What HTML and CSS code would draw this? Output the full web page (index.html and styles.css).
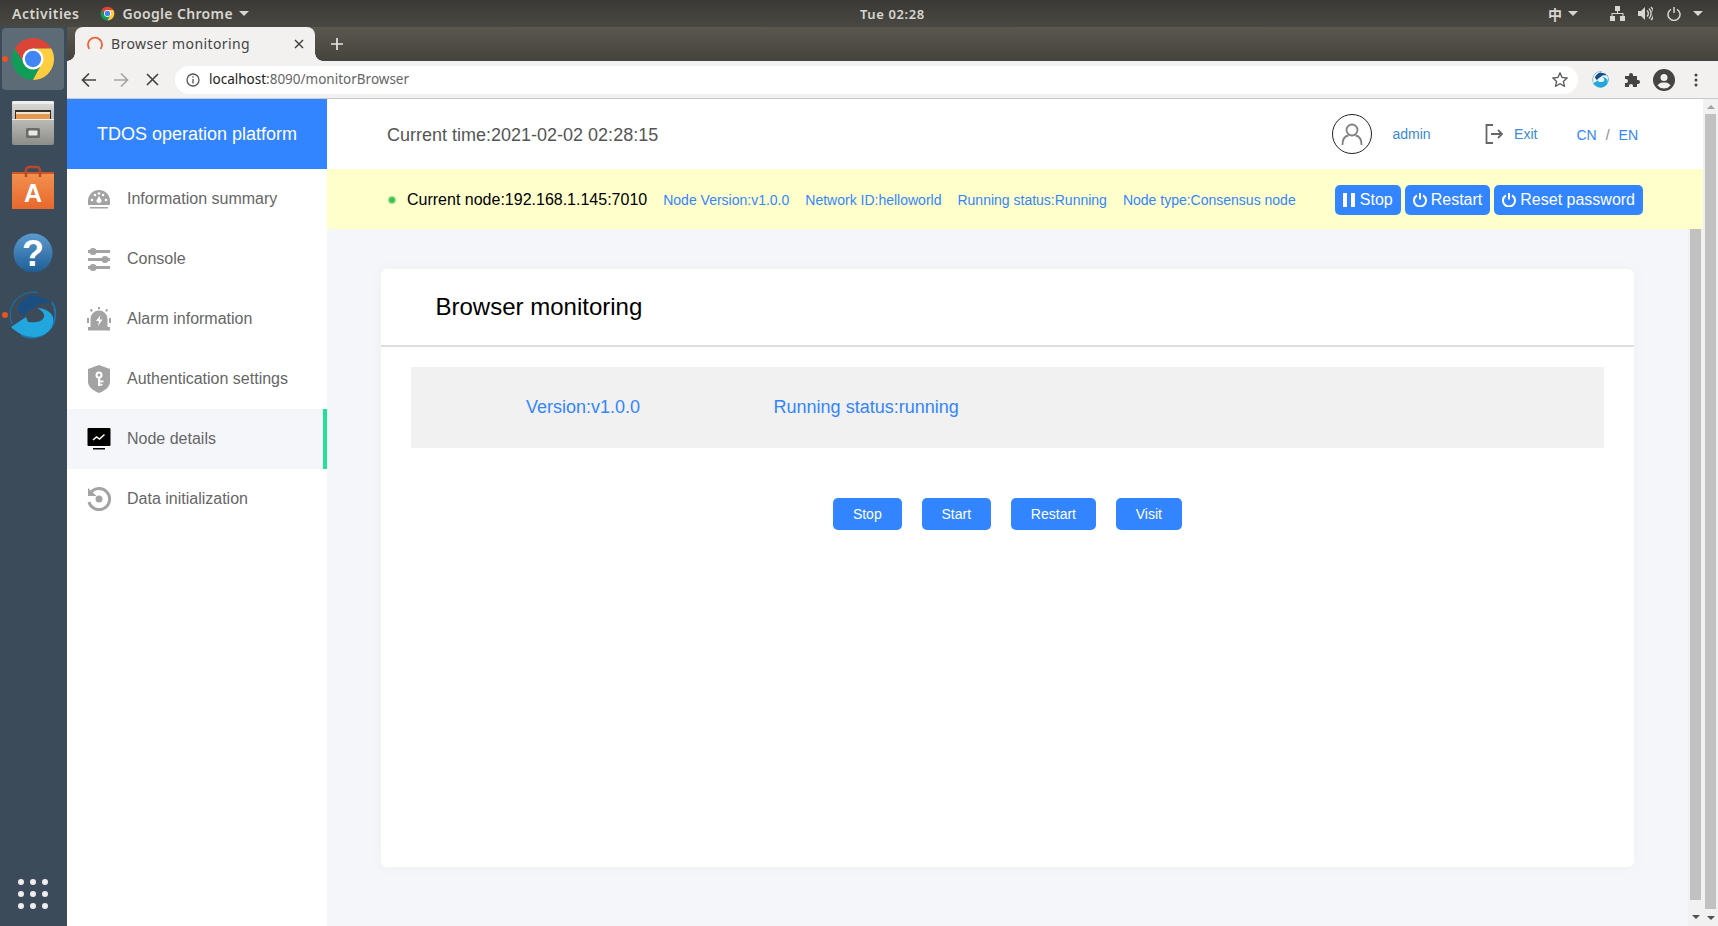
FILE: index.html
```html
<!DOCTYPE html>
<html lang="en">
<head>
    <meta charset="UTF-8">
    <meta name="viewport" content="width=device-width, initial-scale=1.0">
    <title>Browser monitoring</title>
    <link rel="stylesheet" href="styles.css">
</head>
<body>
    <svg class="defs" width="0" height="0">
        <symbol id="chrome" viewBox="0 0 48 48">
            <path fill="#db4437" d="M5 13A22 22 0 0 1 43 13L24 13 15 29Z"/>
            <path fill="#0f9d58" d="M5 13A22 22 0 0 0 24 46L33 29 15 29Z"/>
            <path fill="#ffcd40" d="M43 13A22 22 0 0 1 24 46L33 29 24 13Z"/>
            <circle cx="24" cy="24" r="11" fill="#fff"/>
            <circle cx="24" cy="24" r="8.5" fill="#4285f4"/>
        </symbol>
        <symbol id="swirl" viewBox="0 0 48 48">
            <path fill="none" stroke="#1a6ea8" stroke-width="1.3" d="M28 1.5A23 23 0 0 0 3 33"/>
            <path fill="none" stroke="#1c78b4" stroke-width="1.600" d="M43 11A23.500 23.500 0 0 1 12 44"/>
            <path fill="#1b4f82" d="M8 18C12 9 18 5 24 4L38 8 42 13C36 11 30 12 27 15L17 22 14 26Z"/>
            <path fill="#22a6de" d="M2 36L17 26 19 31C26 32 33 31 35 26 36 22 32 19 28 17 36 17 42 21 44 26 46 36 38 46 24 46 16 46 8 42 2 36Z"/>
        </symbol>
    </svg>

    <div class="topbar">
        <span class="activities">Activities</span>
        <svg class="app-icon" width="15" height="15"><use href="#chrome"/></svg>
        <span class="app-name">Google Chrome</span>
        <span class="caret"></span>
        <span class="clock">Tue 02:28</span>
        <div class="tray">
            <span class="ime">中</span>
            <span class="caret"></span>
            <svg class="tray-net" width="15" height="15" viewBox="0 0 15 15" fill="#d8d6d0">
                <rect x="5" y="0" width="5" height="5"/><rect x="0" y="10" width="5" height="5"/><rect x="10" y="10" width="5" height="5"/>
                <path d="M7 5h1v2h5.500v3h-1V8H2.500v2h-1V7H7z"/>
            </svg>
            <svg class="tray-sound" width="15" height="15" viewBox="0 0 15 15" fill="none" stroke="#d8d6d0" stroke-width="1.400">
                <path fill="#d8d6d0" stroke="none" d="M0 5h3l4-4v13l-4-4H0z"/>
                <path d="M9 4.500a4 4 0 0 1 0 6M11 2.500a7 7 0 0 1 0 10M13 1a9 9 0 0 1 0 13"/>
            </svg>
            <svg class="tray-power" width="14" height="14" viewBox="0 0 14 14" fill="none" stroke="#d8d6d0" stroke-width="1.500">
                <path d="M4 2.300a6 6 0 1 0 6 0M7 0v6"/>
            </svg>
            <span class="caret"></span>
        </div>
    </div>

    <div class="desktop">
        <nav class="dock">
            <div class="dock-tile">
                <svg width="46" height="46"><use href="#chrome"/></svg>
                <span class="dock-dot"></span>
            </div>
            <div class="dock-item">
                <svg width="44" height="46" viewBox="0 0 44 46">
                    <defs>
                        <linearGradient id="cab" x1="0" y1="0" x2="0" y2="1"><stop offset="0" stop-color="#dcdcda"/><stop offset="1" stop-color="#8c8c89"/></linearGradient>
                    </defs>
                    <rect x="1" y="0" width="42" height="44" rx="2" fill="url(#cab)"/>
                    <rect x="1" y="0" width="42" height="3" rx="1.500" fill="#efefed"/>
                    <rect x="4" y="9" width="36" height="9" fill="#332e29"/>
                    <rect x="5" y="11" width="34" height="2" fill="#f4e4cf"/>
                    <rect x="5" y="13" width="34" height="5" fill="#e39a50"/>
                    <rect x="1" y="18" width="42" height="1" fill="#efefed"/>
                    <rect x="15" y="27" width="14" height="10" rx="1.500" fill="#6a6a68"/>
                    <rect x="17.500" y="29.500" width="9" height="5" rx="1" fill="#e8e8e6"/>
                </svg>
            </div>
            <div class="dock-item">
                <svg width="44" height="46" viewBox="0 0 44 46">
                    <defs>
                        <linearGradient id="bag" x1="0" y1="0" x2="0" y2="1"><stop offset="0" stop-color="#f29350"/><stop offset="1" stop-color="#e8672c"/></linearGradient>
                    </defs>
                    <rect x="1" y="7" width="42" height="37" fill="url(#bag)"/>
                    <rect x="1" y="7" width="42" height="2" fill="#c9572b"/>
                    <path fill="none" stroke="#b9472a" stroke-width="2.500" d="M15 12V5a3 3 0 0 1 3-3h8a3 3 0 0 1 3 3v7"/>
                    <text class="bag-a" x="22" y="37" text-anchor="middle">A</text>
                </svg>
            </div>
            <div class="dock-item">
                <svg width="40" height="40" viewBox="0 0 40 40">
                    <defs>
                        <linearGradient id="hlp" x1="0" y1="0" x2="0" y2="1"><stop offset="0" stop-color="#5a9bce"/><stop offset="1" stop-color="#1f5d96"/></linearGradient>
                    </defs>
                    <circle cx="20" cy="20" r="19.500" fill="url(#hlp)"/>
                    <text class="help-q" x="20" y="33" text-anchor="middle">?</text>
                </svg>
            </div>
            <div class="dock-item dock-item-last">
                <svg width="48" height="48"><use href="#swirl"/></svg>
                <span class="dock-dot"></span>
            </div>
            <div class="app-grid">
                <i></i><i></i><i></i><i></i><i></i><i></i><i></i><i></i><i></i>
            </div>
        </nav>

        <div class="browser">
            <div class="tabstrip">
                <div class="tab">
                    <svg width="16" height="16" viewBox="0 0 16 16" fill="none" stroke="#e8663c" stroke-width="1.800">
                        <path d="M2.500 13A7 7 0 1 1 13.500 13"/>
                    </svg>
                    <span class="tab-title">Browser monitoring</span>
                    <svg class="tab-close" width="10" height="10" viewBox="0 0 10 10" stroke="#444" stroke-width="1.500"><path d="M1 1l8 8M9 1l-8 8"/></svg>
                </div>
                <svg class="tab-new" width="14" height="14" viewBox="0 0 14 14" stroke="#e8e6e2" stroke-width="1.700"><path d="M7 1v12M1 7h12"/></svg>
            </div>

            <div class="toolbar">
                <svg class="nav-back" width="16" height="16" viewBox="0 0 16 16" fill="none" stroke="#444" stroke-width="1.700"><path d="M15 8H2M8 1.500L1.500 8 8 14.500"/></svg>
                <svg class="nav-forward" width="16" height="16" viewBox="0 0 16 16" fill="none" stroke="#a5a5a5" stroke-width="1.700"><path d="M1 8h13M8 1.500L14.500 8 8 14.500"/></svg>
                <svg class="nav-stop" width="13" height="13" viewBox="0 0 13 13" stroke="#444" stroke-width="1.700"><path d="M1 1l11 11M12 1L1 12"/></svg>
                <div class="omnibox">
                    <svg width="14" height="14" viewBox="0 0 14 14" fill="none" stroke="#555" stroke-width="1.300">
                        <circle cx="7" cy="7" r="6"/><path d="M7 6v4.500M7 3.300v1.500"/>
                    </svg>
                    <span class="url"><b>localhost</b>:8090/monitorBrowser</span>
                    <svg class="star" width="16" height="15" viewBox="0 0 16 15" fill="none" stroke="#555" stroke-width="1.300">
                        <path d="M8 1l2.100 4.500 4.900.6-3.600 3.300 1 4.800L8 11.800 3.600 14.200l1-4.800L1 6.100l4.900-.6z"/>
                    </svg>
                </div>
                <svg class="ext-logo" width="17" height="17"><use href="#swirl"/></svg>
                <svg class="ext-puzzle" width="16" height="16" viewBox="0 0 16 16" fill="#444">
                    <path d="M1 4h4V3a2 2 0 0 1 4 0v1h4v4h1a2 2 0 0 1 0 4h-1v3H9v-1a2 2 0 0 0-4 0v1H1v-4h1a2 2 0 0 0 0-4H1z"/>
                </svg>
                <svg class="profile" width="22" height="22" viewBox="0 0 22 22">
                    <circle cx="11" cy="11" r="11" fill="#444"/>
                    <circle cx="11" cy="8.500" r="3.500" fill="#f2f1f0"/>
                    <path fill="#f2f1f0" d="M4.500 16.500C6 13.800 8.500 13.500 11 13.500s5 .3 6.500 3A8.500 8.500 0 0 1 11 19.500a8.500 8.500 0 0 1-6.500-3z"/>
                </svg>
                <svg class="menu-dots" width="4" height="14" viewBox="0 0 4 14" fill="#444"><circle cx="2" cy="2" r="1.500"/><circle cx="2" cy="7" r="1.500"/><circle cx="2" cy="12" r="1.500"/></svg>
            </div>

            <div class="page">
                <aside class="sidebar">
                    <div class="brand">TDOS operation platform</div>
                    <a class="menu-item">
                        <svg width="24" height="24" viewBox="0 0 24 24" fill="#a3a3a3">
                            <path d="M1 18V14A11 11 0 0 1 23 14V18Z"/>
                            <rect x="3" y="20" width="18" height="1.500"/>
                            <g fill="#fff"><circle cx="5" cy="13" r="1.300"/><circle cx="8" cy="8" r="1.300"/><circle cx="16" cy="8" r="1.300"/><circle cx="19" cy="13" r="1.300"/><circle cx="12" cy="6.500" r="1.300"/><path d="M12 9l2.500 4.500a2.500 2.500 0 1 1-5 0z"/></g>
                        </svg>
                        Information summary
                    </a>
                    <a class="menu-item">
                        <svg width="24" height="24" viewBox="0 0 24 24" fill="#a3a3a3">
                            <rect x="1" y="3" width="22" height="3"/><rect x="1" y="11" width="22" height="3"/><rect x="1" y="19" width="22" height="3"/>
                            <circle cx="6" cy="4.500" r="3.500"/><circle cx="18" cy="12.500" r="3.500"/><circle cx="6" cy="20.500" r="3.500"/>
                        </svg>
                        Console
                    </a>
                    <a class="menu-item">
                        <svg width="24" height="24" viewBox="0 0 24 24" fill="#a3a3a3">
                            <path d="M3.500 20v-8a8.500 8.500 0 0 1 17 0v8z"/>
                            <rect x="1" y="20" width="22" height="3.500"/>
                            <path fill="#fff" d="M13.500 8l-4.500 6h3l-1 5 4.500-6.500h-3z"/>
                            <path d="M11 0h2v2.200h-2zM2.800 3l1.500-1.300 1.600 1.900-1.500 1.300zM21.200 3l-1.500-1.300-1.600 1.900 1.500 1.300zM0 11h2v5H0zM22 11h2v5h-2z"/>
                        </svg>
                        Alarm information
                    </a>
                    <a class="menu-item">
                        <svg width="24" height="28" viewBox="0 0 24 28" fill="#a3a3a3">
                            <path d="M12 0L23 4V17C23 22 17 26 12 28 7 26 1 22 1 17V4Z"/>
                            <circle cx="12" cy="10" r="2.500" fill="none" stroke="#fff" stroke-width="2"/>
                            <path fill="#fff" d="M11 12h2.200v9H11zM13 15.500h3.500v1.800H13zM13 18.800h2.500v1.800H13z"/>
                        </svg>
                        Authentication settings
                    </a>
                    <a class="menu-item menu-item-active">
                        <svg width="24" height="22" viewBox="0 0 24 22">
                            <rect x="0.500" y="0" width="23" height="18" rx="1" fill="#000"/>
                            <rect x="6" y="20" width="12" height="1.500" fill="#000"/>
                            <path fill="none" stroke="#fff" stroke-width="1.500" d="M6 12l3.500-3 3 2 5-4.500"/>
                        </svg>
                        Node details
                    </a>
                    <a class="menu-item">
                        <svg width="24" height="24" viewBox="0 0 24 24" fill="none" stroke="#a3a3a3" stroke-width="3">
                            <path d="M3.500 6A10.500 10.500 0 1 1 2 15"/>
                            <path fill="#a3a3a3" stroke="none" d="M1 1l8.500 8H1z"/>
                            <circle cx="12" cy="12" r="3.500" fill="#a3a3a3" stroke="none"/>
                        </svg>
                        Data initialization
                    </a>
                </aside>

                <main class="main">
                    <header class="top-header">
                        <span class="current-time">Current time:2021-02-02 02:28:15</span>
                        <div class="avatar">
                            <svg width="24" height="24" viewBox="0 0 24 24" fill="none" stroke="#808080" stroke-width="1.800">
                                <circle cx="12" cy="8" r="5.500"/><path d="M2.500 23c0-6 3-9 6-9.500M21.500 23c0-6-3-9-6-9.500"/>
                            </svg>
                        </div>
                        <span class="username">admin</span>
                        <svg class="exit-icon" width="18" height="20" viewBox="0 0 18 20" fill="none" stroke="#666" stroke-width="1.800">
                            <path d="M8 1H1.500v18H8M6 10h11M13 6l4 4-4 4"/>
                        </svg>
                        <span class="exit-link">Exit</span>
                        <span class="lang"><a>CN</a><em>/</em><a>EN</a></span>
                    </header>

                    <div class="node-bar">
                        <span class="node-dot"></span>
                        <span class="node-current">Current node:192.168.1.145:7010</span>
                        <span class="node-info">Node Version:v1.0.0</span>
                        <span class="node-info">Network ID:helloworld</span>
                        <span class="node-info">Running status:Running</span>
                        <span class="node-info">Node type:Consensus node</span>
                        <div class="node-actions">
                            <button class="bar-btn bar-btn-stop">
                                <svg width="12" height="14" viewBox="0 0 12 14" fill="#fff"><rect width="4" height="14"/><rect x="8" width="4" height="14"/></svg>
                                Stop
                            </button>
                            <button class="bar-btn">
                                <svg width="14" height="14" viewBox="0 0 14 14" fill="none" stroke="#fff" stroke-width="2"><path d="M4 2.300a6 6 0 1 0 6 0M7 0v6.500"/></svg>
                                Restart
                            </button>
                            <button class="bar-btn">
                                <svg width="14" height="14" viewBox="0 0 14 14" fill="none" stroke="#fff" stroke-width="2"><path d="M4 2.300a6 6 0 1 0 6 0M7 0v6.500"/></svg>
                                Reset password
                            </button>
                        </div>
                    </div>

                    <div class="content-row">
                        <div class="content">
                            <section class="card">
                                <h2 class="card-title">Browser monitoring</h2>
                                <div class="status-panel">
                                    <span class="status-version">Version:v1.0.0</span>
                                    <span>Running status:running</span>
                                </div>
                                <div class="card-actions">
                                    <button class="action-btn">Stop</button>
                                    <button class="action-btn">Start</button>
                                    <button class="action-btn">Restart</button>
                                    <button class="action-btn">Visit</button>
                                </div>
                            </section>
                        </div>
                        <div class="scrollbar scrollbar-inner">
                            <div class="scroll-thumb"></div>
                            <div class="scroll-end"><span class="arrow-down"></span></div>
                        </div>
                    </div>
                </main>

                <div class="scrollbar scrollbar-outer">
                    <div class="scroll-start"><span class="arrow-up"></span></div>
                    <div class="scroll-thumb"></div>
                    <div class="scroll-end"><span class="arrow-down"></span></div>
                </div>
            </div>
        </div>
    </div>
</body>
</html>
```

FILE: styles.css
```css
/* Global */
* {
    box-sizing: border-box;
}
html, body {
    margin: 0;
    height: 926px;
    overflow: hidden;
}
body {
    display: flex;
    flex-direction: column;
    font-family: "Liberation Sans", Arial, sans-serif;
    background: #fff;
}
.defs {
    position: absolute;
}
svg {
    display: block;
    flex-shrink: 0;
}

/* Ubuntu top bar */
.topbar {
    position: relative;
    height: 27px;
    flex-shrink: 0;
    display: flex;
    align-items: center;
    padding-left: 12px;
    background: linear-gradient(#3a3935, #4a4842);
    color: #d8d6d0;
    font-family: "Noto Sans", sans-serif;
    font-size: 14px;
    font-weight: 600;
}
.activities {
    letter-spacing: 0.5px;
}
.app-icon {
    margin-left: 21px;
}
.app-name {
    margin-left: 7px;
    letter-spacing: 0.35px;
}
.caret {
    width: 0;
    height: 0;
    margin-left: 6px;
    border-left: 5px solid transparent;
    border-right: 5px solid transparent;
    border-top: 5px solid #d8d6d0;
}
.clock {
    position: absolute;
    left: 860px;
    font-size: 13px;
    letter-spacing: 0.6px;
}
.tray {
    margin-left: auto;
    padding-right: 15px;
    display: flex;
    align-items: center;
}
.ime {
    font-family: "Noto Sans CJK SC", sans-serif;
    font-size: 14px;
}
.tray-net {
    margin-left: 32px;
}
.tray-sound {
    margin-left: 13px;
}
.tray-power {
    margin-left: 14px;
}
.tray .caret:last-child {
    margin-left: 12px;
}

.desktop {
    flex: 1;
    display: flex;
    min-height: 0;
}

/* Dock */
.dock {
    position: relative;
    width: 67px;
    flex-shrink: 0;
    display: flex;
    flex-direction: column;
    align-items: center;
    padding-right: 1px;
    background: #3c4b5a;
}
.dock-tile {
    position: relative;
    width: 62px;
    height: 62px;
    margin-top: 1px;
    border-radius: 4px;
    background: #5d6b77;
    display: flex;
    align-items: center;
    justify-content: center;
}
.dock-item {
    position: relative;
    display: flex;
    justify-content: center;
}
.dock-tile + .dock-item {
    margin-top: 11px;
}
.dock-item + .dock-item {
    margin-top: 18px;
}
.dock-item:nth-child(4) {
    margin-top: 22px;
}
.dock-item-last {
    width: 66px;
    margin-top: 18px !important;
}
.dock-dot {
    position: absolute;
    left: 0;
    top: 50%;
    width: 6px;
    height: 6px;
    margin-top: -3px;
    border-radius: 50%;
    background: #e95420;
}
.dock-item-last .dock-dot {
    left: 2px;
}
.bag-a {
    font: bold 25px "Liberation Sans", sans-serif;
    fill: #fff;
}
.help-q {
    font: bold 36px "Liberation Sans", sans-serif;
    fill: #fff;
}
.app-grid {
    margin-top: auto;
    margin-bottom: 17px;
    display: grid;
    grid-template-columns: repeat(3, 6px);
    gap: 6px;
}
.app-grid i {
    width: 6px;
    height: 6px;
    border-radius: 50%;
    background: #eeeeee;
}

/* Chrome window */
.browser {
    flex: 1;
    min-width: 0;
    display: flex;
    flex-direction: column;
}
.tabstrip {
    height: 34px;
    flex-shrink: 0;
    display: flex;
    align-items: center;
    padding-left: 8px;
    background: linear-gradient(#5a574f, #45433d);
}
.tab {
    position: relative;
    width: 240px;
    height: 34px;
    display: flex;
    align-items: center;
    padding: 0 11px 0 12px;
    border-radius: 8px 8px 0 0;
    background: #f2f1f0;
}
.tab::before, .tab::after {
    content: "";
    position: absolute;
    bottom: 0;
    width: 8px;
    height: 8px;
}
.tab::before {
    left: -8px;
    background: radial-gradient(circle at 0 0, transparent 7.500px, #f2f1f0 8px);
}
.tab::after {
    right: -8px;
    background: radial-gradient(circle at 100% 0, transparent 7.500px, #f2f1f0 8px);
}
.tab-title {
    margin: 0 0 2px 8px;
    font-family: "Noto Sans", sans-serif;
    font-size: 14px;
    color: #444;
    letter-spacing: 0.4px;
}
.tab-close {
    margin-left: auto;
}
.tab-new {
    margin-left: 15px;
}
.toolbar {
    height: 38px;
    flex-shrink: 0;
    display: flex;
    align-items: center;
    background: #f2f1f0;
    border-bottom: 1px solid #c9c9c9;
}
.nav-back {
    margin-left: 14px;
}
.nav-forward {
    margin-left: 16px;
}
.nav-stop {
    margin-left: 17px;
}
.omnibox {
    width: 1403px;
    height: 28px;
    margin-left: 16px;
    display: flex;
    align-items: center;
    padding: 0 10px 0 11px;
    border-radius: 14px;
    background: #fff;
    font-family: "Noto Sans", sans-serif;
    font-size: 13.500px;
    color: #666;
}
.url {
    margin: 0 0 2px 9px;
}
.url b {
    font-weight: 400;
    color: #222;
}
.star {
    margin-left: auto;
}
.ext-logo {
    margin-left: 14px;
    border-radius: 50%;
    background: #e8f4fb;
}
.ext-puzzle {
    margin-left: 15px;
}
.profile {
    margin-left: 13px;
}
.menu-dots {
    margin-left: 19px;
}

/* Page */
.page {
    flex: 1;
    min-height: 0;
    display: flex;
}
.sidebar {
    width: 260px;
    flex-shrink: 0;
    background: #fff;
}
.brand {
    height: 70px;
    display: flex;
    align-items: center;
    justify-content: center;
    background: #3385ff;
    color: #fff;
    font-size: 18px;
}
.menu-item {
    height: 60px;
    display: flex;
    align-items: center;
    gap: 16px;
    padding-left: 20px;
    font-size: 16px;
    color: #666;
}
.menu-item-active {
    background: #f5f6fa;
    border-right: 4px solid #22e19a;
}
.main {
    flex: 1;
    min-width: 0;
    display: flex;
    flex-direction: column;
    background: #f5f6fa;
}
.top-header {
    height: 70px;
    flex-shrink: 0;
    display: flex;
    align-items: center;
    padding: 0 65px 0 60px;
    background: #fff;
    font-size: 14px;
}
.current-time {
    margin-top: 2px;
    font-size: 18px;
    color: #555;
}
.avatar {
    width: 40px;
    height: 40px;
    margin-left: auto;
    display: flex;
    align-items: center;
    justify-content: center;
    border: 1.500px solid #222;
    border-radius: 50%;
}
.username {
    margin-left: 20px;
    color: #3a8ad8;
}
.exit-icon {
    margin-left: 54.500px;
}
.exit-link {
    margin-left: 11px;
    color: #3a8ad8;
}
.lang {
    margin: 2px 0 0 39px;
    color: #3385ff;
}
.lang em {
    margin: 0 9px;
    font-style: normal;
    color: #888;
}

/* Node status bar */
.node-bar {
    height: 60px;
    flex-shrink: 0;
    display: flex;
    align-items: center;
    padding: 2px 60px 0 62px;
    background: #ffffcc;
    font-size: 14px;
    color: #3385ff;
}
.node-dot {
    width: 6px;
    height: 6px;
    border-radius: 50%;
    background: #3fc24f;
    box-shadow: 0 0 0 1.500px rgba(63, 194, 79, 0.3);
}
.node-current {
    margin-left: 12px;
    margin-right: 16px;
    font-size: 16px;
    color: #000;
}
.node-info {
    margin-right: 16px;
}
.node-actions {
    margin-left: auto;
    display: flex;
    gap: 4px;
}
.bar-btn {
    height: 30px;
    display: flex;
    align-items: center;
    gap: 4px;
    padding: 0 8px;
    border: 0;
    border-radius: 5px;
    background: #3385ff;
    color: #fff;
    font-family: inherit;
    font-size: 16px;
}
.bar-btn-stop {
    gap: 5px;
}

/* Content */
.content-row {
    flex: 1;
    min-height: 0;
    display: flex;
}
.content {
    flex: 1;
    min-width: 0;
    padding: 40px 54px 0;
}
.card {
    height: 598px;
    border-radius: 6px;
    background: #fff;
    box-shadow: 0 0 16px rgba(0, 0, 0, 0.03);
}
.card-title {
    height: 78px;
    margin: 0;
    padding-left: 54.500px;
    display: flex;
    align-items: center;
    border-bottom: 2px solid #dedede;
    font-size: 24px;
    font-weight: 400;
    color: #000;
}
.status-panel {
    height: 81px;
    margin: 20px 30px 0;
    display: flex;
    align-items: center;
    padding-left: 115px;
    background: #f1f1f1;
    font-size: 18px;
    color: #3385ff;
}
.status-version {
    margin-right: 133.500px;
}
.card-actions {
    margin-top: 50px;
    padding-left: 452px;
    display: flex;
    gap: 20px;
}
.action-btn {
    height: 32px;
    padding: 0 19.900px;
    border: 0;
    border-radius: 5px;
    background: #3385ff;
    color: #fff;
    font-family: inherit;
    font-size: 14px;
}

/* Scrollbars */
.scrollbar {
    width: 15px;
    flex-shrink: 0;
    display: flex;
    flex-direction: column;
    background: #f1f1f1;
}
.scroll-thumb {
    flex: 1;
    margin: 0 2px;
    background: #c1c1c1;
}
.scroll-start {
    height: 15px;
    display: flex;
    align-items: center;
    justify-content: center;
}
.scroll-end {
    height: 17px;
    display: flex;
    align-items: center;
    justify-content: center;
}
.scrollbar-inner .scroll-end {
    height: 26px;
    align-items: flex-end;
    padding-bottom: 7px;
}
.arrow-up, .arrow-down {
    width: 0;
    height: 0;
    border-left: 4px solid transparent;
    border-right: 4px solid transparent;
}
.arrow-up {
    border-bottom: 4px solid #a3a3a3;
}
.arrow-down {
    border-top: 4px solid #505050;
}
```
